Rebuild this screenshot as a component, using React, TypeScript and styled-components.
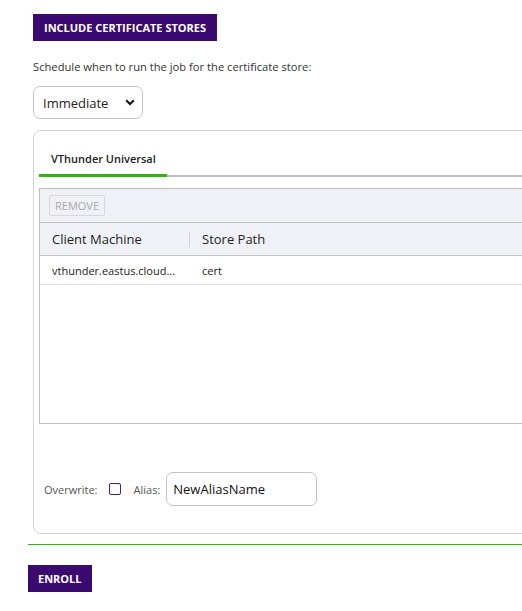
import React from 'react';
import styled, { createGlobalStyle } from 'styled-components';

const GlobalStyle = createGlobalStyle`
  body {
    margin: 0;
    background: #fff;
    font-family: "Open Sans", Lato, Arial, sans-serif;
    overflow: hidden;
  }
`;

const Page = styled.div`
  width: 560px;
  padding-top: 14px;
`;

const Section = styled.div`
  padding-left: 33px;
  display: flex;
  flex-direction: column;
  align-items: flex-start;
`;

const PurpleButton = styled.button<{ $pad?: number }>`
  background: #3b0a70;
  color: #fff;
  border: none;
  border-radius: 0;
  font-family: inherit;
  font-size: 11px;
  font-weight: 700;
  text-transform: uppercase;
  height: 27px;
  padding: 0 ${(p) => p.$pad ?? 11}px;
  cursor: pointer;
`;

const Hint = styled.p`
  margin: 18px 0 0;
  font-size: 11.2px;
  color: #333;
`;

const SelectWrap = styled.div`
  margin-top: 12px;
  width: 110px;
  height: 33px;
  box-sizing: border-box;
  border: 1px solid #c4c4c4;
  border-radius: 7px;
  display: flex;
  align-items: center;
  justify-content: space-between;
  padding: 0 7px 0 9px;
  font-size: 13px;
  color: #222;
`;

const Card = styled.div`
  margin-top: 11px;
  width: 520px;
  height: 404px;
  box-sizing: border-box;
  border: 1px solid #d4d4d4;
  border-radius: 8px;
  padding: 18px 0 0 5px;
  display: flex;
  flex-direction: column;
`;

const Tabs = styled.div`
  display: flex;
  border-bottom: 2px solid #c0c0c0;
`;

const Tab = styled.div<{ $active?: boolean }>`
  font-size: 11px;
  font-weight: 600;
  color: #222;
  white-space: nowrap;
  padding: 2px 0 8px 12px;
  width: 128px;
  box-sizing: border-box;
  margin-bottom: -2px;
  border-bottom: 3px solid ${(p) => (p.$active ? '#2db50b' : 'transparent')};
`;

const Grid = styled.div`
  margin-top: 11px;
  height: 234px;
  border: 1px solid #bdbdbd;
  border-right: none;
  display: flex;
  flex-direction: column;
`;

const Toolbar = styled.div`
  height: 33px;
  background: #f0f1f6;
  border-bottom: 1px solid #c4c4c4;
  display: flex;
  align-items: center;
  padding-left: 9px;
`;

const GhostButton = styled.button`
  height: 21px;
  padding: 0 5px;
  background: transparent;
  border: 1px solid #d8d8d8;
  border-radius: 2px;
  color: #aaa;
  font-family: inherit;
  font-size: 11px;
  text-transform: uppercase;
`;

const Row = styled.div<{ $head?: boolean }>`
  display: flex;
  align-items: center;
  height: ${(p) => (p.$head ? 32 : 28)}px;
  background: ${(p) => (p.$head ? '#f0f1f6' : '#fff')};
  border-bottom: 1px solid ${(p) => (p.$head ? '#c4c4c4' : '#dedede')};
  font-size: ${(p) => (p.$head ? 13 : 11)}px;
  color: #222;
`;

const Cell = styled.div<{ $w: number; $sep?: boolean }>`
  width: ${(p) => p.$w}px;
  box-sizing: border-box;
  padding-left: 12px;
  white-space: nowrap;
  position: relative;
  ${(p) =>
    p.$sep &&
    `&::after {
      content: '';
      position: absolute;
      right: 0;
      top: 2px;
      bottom: 1px;
      border-right: 1px solid #d0d0d0;
    }`}
`;

const Options = styled.div`
  margin-top: 48px;
  display: flex;
  align-items: center;
  padding-left: 5px;
  font-size: 11px;
  color: #555;
`;

const Check = styled.span`
  width: 12px;
  height: 12px;
  box-sizing: border-box;
  border: 1.5px solid #4a1a86;
  border-radius: 2px;
  margin: 0 13px 0 11px;
`;

const AliasInput = styled.div`
  margin-left: 6px;
  width: 151px;
  height: 34px;
  box-sizing: border-box;
  border: 1px solid #c4c4c4;
  border-radius: 7px;
  display: flex;
  align-items: center;
  padding-left: 6px;
  font-size: 13px;
  color: #111;
`;

const Divider = styled.div`
  margin: 10px 0 20px 28px;
  height: 1px;
  background: #2db50b;
`;

const Footer = styled.div`
  padding-left: 28px;
`;

export default function App() {
  return (
    <Page>
      <GlobalStyle />
      <Section>
        <PurpleButton>Include Certificate Stores</PurpleButton>
        <Hint>Schedule when to run the job for the certificate store:</Hint>
        <SelectWrap>
          <span>Immediate</span>
          <svg width="10" height="7" viewBox="0 0 10 7">
            <path d="M1.2 1.2 L5 5 L8.8 1.2" fill="none" stroke="#111" strokeWidth="2" />
          </svg>
        </SelectWrap>
        <Card>
          <Tabs>
            <Tab $active>VThunder Universal</Tab>
          </Tabs>
          <Grid>
            <Toolbar>
              <GhostButton disabled>Remove</GhostButton>
            </Toolbar>
            <Row $head>
              <Cell $w={150} $sep>Client Machine</Cell>
              <Cell $w={200}>Store Path</Cell>
            </Row>
            <Row>
              <Cell $w={150}>vthunder.eastus.cloud...</Cell>
              <Cell $w={200}>cert</Cell>
            </Row>
          </Grid>
          <Options>
            <span>Overwrite:</span>
            <Check />
            <span>Alias:</span>
            <AliasInput>NewAliasName</AliasInput>
          </Options>
        </Card>
      </Section>
      <Divider />
      <Footer>
        <PurpleButton $pad={10}>Enroll</PurpleButton>
      </Footer>
    </Page>
  );
}
